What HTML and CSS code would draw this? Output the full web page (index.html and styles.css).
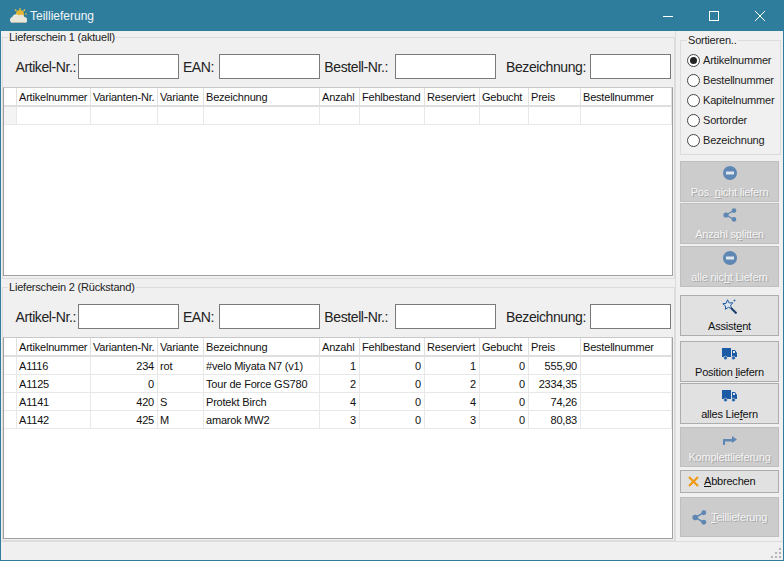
FILE: index.html
```html
<!DOCTYPE html>
<html lang="de">
<head>
    <meta charset="UTF-8">
    <title>Teillieferung</title>
    <link rel="stylesheet" href="styles.css">
</head>
<body>
    <svg class="defs" width="0" height="0">
        <symbol id="i-minus" viewBox="0 0 14 14">
            <circle cx="7" cy="7" r="7" fill="currentColor"/>
            <rect x="3" y="5.5" width="8" height="3" fill="#dfe6ee"/>
        </symbol>
        <symbol id="i-share" viewBox="0 0 14 14">
            <path d="M11 2.5 3 7l8 4.5" fill="none" stroke="currentColor" stroke-width="1.4"/>
            <circle cx="3" cy="7" r="2.6" fill="currentColor"/>
            <circle cx="11" cy="2.6" r="2.3" fill="currentColor"/>
            <circle cx="11" cy="11.4" r="2.3" fill="currentColor"/>
        </symbol>
        <symbol id="i-truck" viewBox="0 0 15 12">
            <rect x="0" y="0" width="9" height="9" fill="currentColor"/>
            <path d="M10 2h3l2 3v4h-5z" fill="currentColor"/>
            <rect x="11" y="3" width="2" height="2" fill="#dfe6ee"/>
            <circle cx="3.5" cy="10" r="1.8" fill="currentColor" stroke="#e1e1e1" stroke-width=".6"/>
            <circle cx="11.5" cy="10" r="1.8" fill="currentColor" stroke="#e1e1e1" stroke-width=".6"/>
        </symbol>
        <symbol id="i-arrow" viewBox="0 0 15 11">
            <path d="M1 11V5h9V2l5 3.5L10 9V7.500H3V11z" fill="currentColor"/>
        </symbol>
        <symbol id="i-wand" viewBox="0 0 15 15">
            <path d="M5.500.8 7.200 4l3.600-.3L8.600 6.400l1 3.200-3.200-1.300-3 2L3.600 7 .8 4.800l3.500-.6z" fill="#dfe6ee" stroke="currentColor" stroke-width="1"/>
            <path d="m9 9 5.500 5.500" stroke="#1d3f6e" stroke-width="2"/>
            <path d="M11.500 1.500h2M12.500.5v2" stroke="currentColor" stroke-width=".8"/>
        </symbol>
    </svg>

    <div class="window">
        <header class="titlebar">
            <svg class="logo" width="18" height="16" viewBox="0 0 18 16">
                <circle cx="11" cy="6" r="4" fill="#e2b62f"/>
                <path d="M11 0v2M16 1.500l-1.500 1.500M18 6h-2M6 1.500 7.500 3" stroke="#e8c64a" stroke-width="1.200"/>
                <path d="M4 15a3 3 0 0 1-.8-5.900A4 4 0 0 1 10 7.500 3.300 3.300 0 0 1 15.500 9 3 3 0 0 1 15 15z" fill="#e9e6dc"/>
                <path d="M4 15h11a3 3 0 0 0 1.800-1H2a3 3 0 0 0 2 1z" fill="#b9b6ab"/>
            </svg>
            <span class="title">Teillieferung</span>
            <div class="controls">
                <span class="ctl"><svg width="10" height="10" viewBox="0 0 10 10"><path d="M0 5.500h10" stroke="#fff"/></svg></span>
                <span class="ctl"><svg width="10" height="10" viewBox="0 0 10 10"><rect x=".5" y=".5" width="9" height="9" fill="none" stroke="#fff"/></svg></span>
                <span class="ctl"><svg width="10" height="10" viewBox="0 0 10 10"><path d="m0 0 10 10M10 0 0 10" stroke="#fff"/></svg></span>
            </div>
        </header>

        <div class="content">
            <main class="main">
                <fieldset class="group group-top">
                    <legend>Lieferschein 1 (aktuell)</legend>
                    <div class="filters">
                        <label class="lbl lbl-art">Artikel-Nr.:</label><input class="inp" type="text">
                        <label class="lbl lbl-ean">EAN:</label><input class="inp" type="text">
                        <label class="lbl lbl-best">Bestell-Nr.:</label><input class="inp" type="text">
                        <label class="lbl lbl-bez">Bezeichnung:</label><input class="inp inp-small" type="text">
                    </div>
                    <div class="grid grid-top">
                        <table>
                            <colgroup>
                                <col class="c-head"><col class="c-art"><col class="c-var"><col class="c-vart"><col class="c-bez"><col class="c-anz"><col class="c-fehl"><col class="c-res"><col class="c-geb"><col class="c-preis"><col class="c-best">
                            </colgroup>
                            <thead>
                                <tr><th></th><th>Artikelnummer</th><th>Varianten-Nr.</th><th>Variante</th><th>Bezeichnung</th><th>Anzahl</th><th>Fehlbestand</th><th>Reserviert</th><th>Gebucht</th><th>Preis</th><th>Bestellnummer</th></tr>
                            </thead>
                            <tbody>
                                <tr><td class="new-row"></td><td></td><td></td><td></td><td></td><td></td><td></td><td></td><td></td><td></td><td></td></tr>
                            </tbody>
                        </table>
                    </div>
                </fieldset>

                <fieldset class="group group-bottom">
                    <legend>Lieferschein 2 (Rückstand)</legend>
                    <div class="filters">
                        <label class="lbl lbl-art">Artikel-Nr.:</label><input class="inp" type="text">
                        <label class="lbl lbl-ean">EAN:</label><input class="inp" type="text">
                        <label class="lbl lbl-best">Bestell-Nr.:</label><input class="inp" type="text">
                        <label class="lbl lbl-bez">Bezeichnung:</label><input class="inp inp-small" type="text">
                    </div>
                    <div class="grid grid-bottom">
                        <table>
                            <colgroup>
                                <col class="c-head"><col class="c-art"><col class="c-var"><col class="c-vart"><col class="c-bez"><col class="c-anz"><col class="c-fehl"><col class="c-res"><col class="c-geb"><col class="c-preis"><col class="c-best">
                            </colgroup>
                            <thead>
                                <tr><th></th><th>Artikelnummer</th><th>Varianten-Nr.</th><th>Variante</th><th>Bezeichnung</th><th>Anzahl</th><th>Fehlbestand</th><th>Reserviert</th><th>Gebucht</th><th>Preis</th><th>Bestellnummer</th></tr>
                            </thead>
                            <tbody>
                                <tr><td></td><td>A1116</td><td class="num">234</td><td>rot</td><td>#velo Miyata N7 (v1)</td><td class="num">1</td><td class="num">0</td><td class="num">1</td><td class="num">0</td><td class="num">555,90</td><td></td></tr>
                                <tr><td></td><td>A1125</td><td class="num">0</td><td></td><td>Tour de Force GS780</td><td class="num">2</td><td class="num">0</td><td class="num">2</td><td class="num">0</td><td class="num">2334,35</td><td></td></tr>
                                <tr><td></td><td>A1141</td><td class="num">420</td><td>S</td><td>Protekt Birch</td><td class="num">4</td><td class="num">0</td><td class="num">4</td><td class="num">0</td><td class="num">74,26</td><td></td></tr>
                                <tr><td></td><td>A1142</td><td class="num">425</td><td>M</td><td>amarok MW2</td><td class="num">3</td><td class="num">0</td><td class="num">3</td><td class="num">0</td><td class="num">80,83</td><td></td></tr>
                            </tbody>
                        </table>
                    </div>
                </fieldset>
            </main>

            <aside class="sidebar">
                <fieldset class="sort">
                    <legend>Sortieren..</legend>
                    <label class="radio"><span class="dot checked"></span>Artikelnummer</label>
                    <label class="radio"><span class="dot"></span>Bestellnummer</label>
                    <label class="radio"><span class="dot"></span>Kapitelnummer</label>
                    <label class="radio"><span class="dot"></span>Sortorder</label>
                    <label class="radio"><span class="dot"></span>Bezeichnung</label>
                </fieldset>

                <button class="btn off btn-first"><svg width="14" height="14"><use href="#i-minus"/></svg><span>Pos. <u>n</u>icht liefern</span></button>
                <button class="btn off mt1"><svg width="14" height="14"><use href="#i-share"/></svg><span>Anzahl s<u>p</u>litten</span></button>
                <button class="btn off mt2"><svg width="14" height="14"><use href="#i-minus"/></svg><span>alle nic<u>h</u>t Liefern</span></button>
                <button class="btn mt8"><svg width="15" height="15"><use href="#i-wand"/></svg><span>Assist<u>e</u>nt</span></button>
                <button class="btn mt5"><svg width="15" height="12"><use href="#i-truck"/></svg><span>Position <u>l</u>iefern</span></button>
                <button class="btn mt1"><svg width="15" height="12"><use href="#i-truck"/></svg><span>alles Lie<u>f</u>ern</span></button>
                <button class="btn off mt3 btn-short"><svg width="15" height="11"><use href="#i-arrow"/></svg><span>Komplettlieferung</span></button>
                <button class="btn btn-row btn-cancel">
                    <svg class="x" width="11" height="11" viewBox="0 0 11 11"><path d="m1 1 9 9M10 1l-9 9" stroke="#f09a12" stroke-width="2.200"/></svg>
                    <span><u>A</u>bbrechen</span>
                </button>
                <button class="btn off btn-row btn-split">
                    <svg width="15" height="15"><use href="#i-share"/></svg>
                    <span><u>T</u>eillieferung</span>
                </button>
            </aside>
        </div>

        <footer class="statusbar">
            <svg class="gripper" width="11" height="11" viewBox="0 0 11 11" fill="#b4b4b4">
                <rect x="8" y="0" width="2" height="2"/>
                <rect x="4" y="4" width="2" height="2"/><rect x="8" y="4" width="2" height="2"/>
                <rect x="0" y="8" width="2" height="2"/><rect x="4" y="8" width="2" height="2"/><rect x="8" y="8" width="2" height="2"/>
            </svg>
        </footer>
    </div>
</body>
</html>
```

FILE: styles.css
```css
* {
    box-sizing: border-box;
    margin: 0;
    padding: 0;
}

body {
    font-family: "Liberation Sans", Arial, sans-serif;
    font-size: 11px;
    letter-spacing: -0.2px;
    color: #111;
    background: #f0f0f0;
}

.defs {
    position: absolute;
}

.window {
    width: 784px;
    height: 561px;
    border: 1px solid #2e7d9d;
    border-top: 0;
    display: flex;
    flex-direction: column;
    background: #f0f0f0;
    overflow: hidden;
}

.titlebar {
    height: 31px;
    flex: none;
    display: flex;
    align-items: center;
    background: #2e7d9d;
    color: #f2f6f8;
    padding-left: 8px;
}

.logo {
    margin-right: 3px;
}

.title {
    font-size: 12px;
    letter-spacing: 0;
}

.controls {
    margin-left: auto;
    display: flex;
}

.ctl {
    width: 46px;
    height: 31px;
    display: flex;
    align-items: center;
    justify-content: center;
}

.content {
    height: 510px;
    flex: none;
    display: flex;
}

.main {
    width: 674px;
    flex: none;
    padding-left: 1px;
}

fieldset {
    border: 1px solid #dcdcdc;
    min-width: 0;
}

legend {
    line-height: 13px;
    padding: 0 1px;
    margin-left: 5px;
    color: #222;
}

.group-top {
    height: 248px;
}

.group-bottom {
    height: 260px;
    margin-top: 2px;
}

.filters {
    display: flex;
    align-items: center;
    margin-top: 10px;
    height: 25px;
    font-size: 14px;
    letter-spacing: -0.4px;
    color: #222;
}

.lbl {
    text-align: right;
    padding-right: 2px;
    white-space: nowrap;
}

.lbl-art { width: 75px; }
.lbl-ean { width: 40px; padding-right: 5px; }
.lbl-best { width: 75px; padding-right: 7px; }
.lbl-bez { width: 94px; padding-right: 4px; }

.inp {
    width: 101px;
    height: 25px;
    flex: none;
    border: 1px solid #7a7a7a;
    background: #fff;
}

.inp-small {
    width: 81px;
}

.grid {
    width: 670px;
    margin-top: 8px;
    border: 1px solid #a0a0a0;
    border-top-color: #c8c8c8;
    background: #fff;
}

.grid-top {
    height: 189px;
}

.grid-bottom {
    height: 202px;
}

table {
    width: 668px;
    table-layout: fixed;
    border-collapse: separate;
    border-spacing: 0;
}

.c-head { width: 13px; }
.c-art { width: 74px; }
.c-var { width: 67px; }
.c-vart { width: 46px; }
.c-bez { width: 116px; }
.c-anz { width: 40px; }
.c-fehl { width: 65px; }
.c-res { width: 55px; }
.c-geb { width: 49px; }
.c-preis { width: 52px; }
.c-best { width: 91px; }

th, td {
    height: 18px;
    padding: 0 2px;
    font-weight: normal;
    text-align: left;
    white-space: nowrap;
    overflow: hidden;
    border-right: 1px solid #e8e8e8;
    border-bottom: 1px solid #e8e8e8;
}

th {
    height: 19px;
    border-right-color: #e0e0e0;
    border-bottom: 2px solid #dedede;
}

td.num {
    text-align: right;
    padding-right: 3px;
}

td.new-row {
    background: #f4f4f4;
}

.sidebar {
    width: 108px;
    flex: none;
    border-left: 1px solid #dcdcdc;
    padding-left: 4px;
}

.sort {
    width: 101px;
    height: 121px;
    margin-top: 3px;
    padding-top: 3px;
}

.sort legend {
    margin-left: 6px;
}

.radio {
    display: flex;
    align-items: center;
    height: 20px;
    padding-left: 6px;
    color: #222;
}

.dot {
    width: 13px;
    height: 13px;
    margin-right: 3px;
    border: 1px solid #444;
    border-radius: 50%;
    background: #fff;
    display: flex;
    align-items: center;
    justify-content: center;
}

.dot.checked::after {
    content: "";
    width: 7px;
    height: 7px;
    border-radius: 50%;
    background: #222;
}

.btn {
    width: 99px;
    height: 41px;
    display: flex;
    flex-direction: column;
    align-items: center;
    justify-content: flex-end;
    padding-bottom: 2px;
    border: 1px solid #adadad;
    background: #e1e1e1;
    color: #111;
    font: inherit;
    letter-spacing: inherit;
    line-height: 13px;
}

.btn svg {
    color: #1b5aa5;
    margin-bottom: 6px;
}

.btn.off {
    border-color: #bfbfbf;
    background: #ccc;
    color: #f4f4f4;
    text-shadow: 1px 1px 0 #a8a8a8;
}

.btn.off svg {
    color: #5f87b4;
}

.btn-first { margin-top: 6px; }
.mt1 { margin-top: 1px; }
.mt2 { margin-top: 2px; }
.mt3 { margin-top: 3px; }
.mt5 { margin-top: 5px; }
.mt8 { margin-top: 8px; }

.btn-short {
    height: 40px;
}

.btn-row {
    flex-direction: row;
    justify-content: flex-start;
    align-items: center;
    padding: 0;
}

.btn-row svg {
    margin-bottom: 0;
}

.btn-cancel {
    height: 23px;
    margin-top: 3px;
    padding-left: 7px;
}

.btn-cancel .x {
    margin-right: 5px;
}

.btn-split {
    height: 40px;
    margin-top: 4px;
    padding-left: 11px;
}

.btn-split svg {
    margin-right: 4px;
}

.statusbar {
    flex: 1;
    display: flex;
    justify-content: flex-end;
    align-items: flex-end;
    border-top: 1px solid #dcdcdc;
    padding: 0 1px 1px 0;
}
```
